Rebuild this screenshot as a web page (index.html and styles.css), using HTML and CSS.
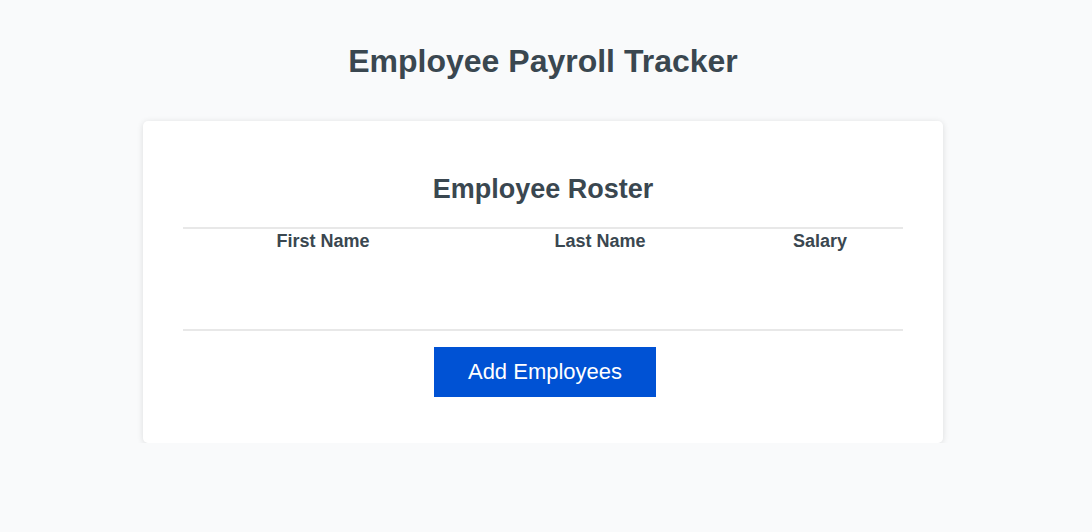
FILE: index.html
```html
<!DOCTYPE html>
<html lang="en">
<head>
<meta charset="utf-8">
<title>Employee Payroll Tracker</title>
<link rel="stylesheet" href="styles.css">
</head>
<body>
  <header class="page-header">
    <h1 class="page-title">Employee Payroll Tracker</h1>
  </header>
  <main class="card">
    <h2 class="card-title">Employee Roster</h2>
    <table class="roster">
      <thead>
        <tr>
          <th class="col-first">First Name</th>
          <th class="col-last">Last Name</th>
          <th class="col-salary">Salary</th>
        </tr>
      </thead>
      <tbody class="roster-body"></tbody>
    </table>
    <div class="actions">
      <button class="btn-add" type="button">Add Employees</button>
    </div>
  </main>
</body>
</html>
```

FILE: styles.css
```css
* { box-sizing: border-box; }

html, body {
  margin: 0;
  padding: 0;
  background: #f9fafb;
  font-family: "Liberation Sans", Arial, Helvetica, sans-serif;
  color: #3a4750;
}

body {
  padding-right: 6px;
}

.page-header {
  padding-top: 43px;
  text-align: center;
}

.page-title {
  margin: 0;
  font-size: 32px;
  font-weight: 700;
  line-height: 37px;
}

.card {
  width: 800px;
  margin: 41px auto 0;
  background: #ffffff;
  border-radius: 5px;
  box-shadow: 0 1px 6px rgba(0, 0, 0, 0.12);
  padding: 53px 40px 46px;
}

.card-title {
  margin: 0 0 22px;
  text-align: center;
  font-size: 27px;
  font-weight: 700;
  line-height: 31px;
}

.roster {
  width: 100%;
  border-collapse: collapse;
  border-top: 2px solid #e8e8e8;
  border-bottom: 2px solid #e8e8e8;
}

.roster th {
  font-size: 18px;
  font-weight: 700;
  padding: 2px 0 0;
  line-height: 21px;
  height: 102px;
  vertical-align: top;
  text-align: center;
}

.col-first { width: 280px; }
.col-last { width: 274px; }
.col-salary { width: 166px; }

.actions {
  display: flex;
  justify-content: center;
  padding: 16px 0 0 4px;
}

.btn-add {
  width: 222px;
  height: 50px;
  border: none;
  border-radius: 0;
  background: #0052d4;
  color: #ffffff;
  font-family: "Liberation Sans", Arial, Helvetica, sans-serif;
  font-size: 22px;
  cursor: pointer;
}
```
